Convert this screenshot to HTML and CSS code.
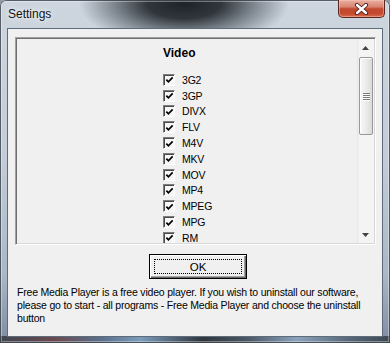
FILE: index.html
```html
<!DOCTYPE html>
<html lang="en">
<head>
<meta charset="utf-8">
<title>Settings</title>
<link rel="stylesheet" href="styles.css">
</head>
<body>
<div class="window">
  <div class="titlebar">
    <span class="title">Settings</span>
    <div class="close-btn">
      <svg width="15" height="12" viewBox="0 0 15 12" aria-hidden="true">
        <path d="M3 2 L12 10 M12 2 L3 10" stroke="#4a1e18" stroke-width="4.2" stroke-linecap="round" fill="none"/>
        <path d="M3 2 L12 10 M12 2 L3 10" stroke="#ffffff" stroke-width="2.4" stroke-linecap="round" fill="none"/>
      </svg>
    </div>
  </div>
  <div class="client">
    <div class="listbox">
      <div class="list-content">
        <div class="heading">Video</div>
        <ul class="items">
          <li><span class="cb"><svg width="10" height="10" viewBox="0 0 10 10"><path d="M1.5 4.5 L3.8 7 L8.5 2" stroke="#000" stroke-width="1.9" fill="none"/></svg></span><span class="label">3G2</span></li>
          <li><span class="cb"><svg width="10" height="10" viewBox="0 0 10 10"><path d="M1.5 4.5 L3.8 7 L8.5 2" stroke="#000" stroke-width="1.9" fill="none"/></svg></span><span class="label">3GP</span></li>
          <li><span class="cb"><svg width="10" height="10" viewBox="0 0 10 10"><path d="M1.5 4.5 L3.8 7 L8.5 2" stroke="#000" stroke-width="1.9" fill="none"/></svg></span><span class="label">DIVX</span></li>
          <li><span class="cb"><svg width="10" height="10" viewBox="0 0 10 10"><path d="M1.5 4.5 L3.8 7 L8.5 2" stroke="#000" stroke-width="1.9" fill="none"/></svg></span><span class="label">FLV</span></li>
          <li><span class="cb"><svg width="10" height="10" viewBox="0 0 10 10"><path d="M1.5 4.5 L3.8 7 L8.5 2" stroke="#000" stroke-width="1.9" fill="none"/></svg></span><span class="label">M4V</span></li>
          <li><span class="cb"><svg width="10" height="10" viewBox="0 0 10 10"><path d="M1.5 4.5 L3.8 7 L8.5 2" stroke="#000" stroke-width="1.9" fill="none"/></svg></span><span class="label">MKV</span></li>
          <li><span class="cb"><svg width="10" height="10" viewBox="0 0 10 10"><path d="M1.5 4.5 L3.8 7 L8.5 2" stroke="#000" stroke-width="1.9" fill="none"/></svg></span><span class="label">MOV</span></li>
          <li><span class="cb"><svg width="10" height="10" viewBox="0 0 10 10"><path d="M1.5 4.5 L3.8 7 L8.5 2" stroke="#000" stroke-width="1.9" fill="none"/></svg></span><span class="label">MP4</span></li>
          <li><span class="cb"><svg width="10" height="10" viewBox="0 0 10 10"><path d="M1.5 4.5 L3.8 7 L8.5 2" stroke="#000" stroke-width="1.9" fill="none"/></svg></span><span class="label">MPEG</span></li>
          <li><span class="cb"><svg width="10" height="10" viewBox="0 0 10 10"><path d="M1.5 4.5 L3.8 7 L8.5 2" stroke="#000" stroke-width="1.9" fill="none"/></svg></span><span class="label">MPG</span></li>
          <li><span class="cb"><svg width="10" height="10" viewBox="0 0 10 10"><path d="M1.5 4.5 L3.8 7 L8.5 2" stroke="#000" stroke-width="1.9" fill="none"/></svg></span><span class="label">RM</span></li>
        </ul>
      </div>
      <div class="scrollbar">
        <div class="sb-arrow"><svg width="7" height="4" viewBox="0 0 7 4"><path d="M0 4 L3.5 0 L7 4 Z" fill="#444"/></svg></div>
        <div class="sb-track">
          <div class="sb-thumb">
            <span class="grip"></span><span class="grip"></span><span class="grip"></span><span class="grip"></span>
          </div>
        </div>
        <div class="sb-arrow"><svg width="7" height="4" viewBox="0 0 7 4"><path d="M0 0 L7 0 L3.5 4 Z" fill="#444"/></svg></div>
      </div>
    </div>
    <div class="btn-row">
      <button class="ok-btn" type="button"><span class="focus">OK</span></button>
    </div>
    <p class="info">Free Media Player is a free video player. If you wish to uninstall our software, please go to start - all programs - Free Media Player and choose the uninstall button</p>
  </div>
</div>
</body>
</html>
```

FILE: styles.css
```css
html, body {
  margin: 0;
  padding: 0;
  width: 390px;
  height: 343px;
  overflow: hidden;
  background: #8e9aa6;
}

.window {
  width: 390px;
  height: 343px;
  box-sizing: border-box;
  display: flex;
  flex-direction: column;
  border-radius: 6px 6px 0 0;
  overflow: hidden;
  background:
    radial-gradient(ellipse 105px 42px at 184px 4px, #1f2327 0%, #30363c 35%, rgba(95,103,112,0.75) 65%, rgba(190,200,210,0) 100%),
    linear-gradient(to right, #3f4650 0%, #6a4a50 14%, #5a6f8a 26%, #7b9bbb 36%, #2f353c 52%, #4c5a68 64%, #8aa2bb 76%, #556575 90%, #3e4852 100%) bottom / 100% 7px no-repeat,
    linear-gradient(to bottom, #cdd6df 0%, #c3cdd7 45%, #a9b7c6 80%, #7d8da0 100%);
  box-shadow: inset 0 0 0 1px rgba(40, 48, 58, 0.75), inset 0 0 0 2px rgba(255, 255, 255, 0.35);
  font-family: "Liberation Sans", Arial, sans-serif;
  font-size: 10.5px;
  letter-spacing: -0.2px;
  color: #000;
}

.titlebar {
  height: 28px;
  flex: 0 0 28px;
  display: flex;
  align-items: flex-start;
  padding: 0 5px 0 8px;
}

.title {
  font-family: "Liberation Sans", Arial, sans-serif;
  font-size: 12px;
  letter-spacing: 0;
  line-height: 14px;
  margin-top: 7px;
  color: #111;
  text-shadow: 0 0 6px rgba(255, 255, 255, 0.9), 0 0 3px rgba(255, 255, 255, 0.7);
}

.close-btn {
  margin-left: auto;
  width: 47px;
  height: 18px;
  box-sizing: border-box;
  border: 1px solid #5a2620;
  border-top: none;
  border-radius: 0 0 5px 5px;
  background: linear-gradient(to bottom, #e9b0a2 0%, #d98571 40%, #c24a30 52%, #c4482d 78%, #d9694d 100%);
  box-shadow: inset 0 0 0 1px rgba(255, 205, 190, 0.45);
  display: flex;
  align-items: center;
  justify-content: center;
}

.close-btn svg {
  display: block;
}

.client {
  flex: 1;
  margin: 0 7px 6px 7px;
  background: #f0f0f0;
  border: 1px solid #5d6b7b;
  display: flex;
  flex-direction: column;
}

.listbox {
  margin: 8px 6px 0 7px;
  height: 208px;
  box-sizing: border-box;
  border: 1px solid;
  border-color: #a0a0a0 #ffffff #ffffff #a0a0a0;
  box-shadow: inset 1px 1px 0 #6f6f6f, inset -1px -1px 0 #d8d8d8;
  padding: 1px;
  display: flex;
  overflow: hidden;
}

.list-content {
  flex: 1;
  padding: 6px 0 0 146px;
  overflow: hidden;
}

.heading {
  font-weight: bold;
  font-size: 12px;
  letter-spacing: 0;
  line-height: 16px;
  margin: 0 0 11px 0;
}

.items {
  list-style: none;
  margin: 0;
  padding: 0;
}

.items li {
  height: 15.8px;
  display: flex;
  align-items: center;
}

.label {
  line-height: 10px;
}

.cb {
  width: 12px;
  height: 12px;
  box-sizing: border-box;
  border: 1px solid;
  border-color: #7d7d7d #ffffff #ffffff #7d7d7d;
  box-shadow: inset 1px 1px 0 #4a4a4a;
  background: #f7f7f7;
  margin-right: 7px;
  display: flex;
  align-items: center;
  justify-content: center;
}

.cb svg {
  display: block;
  margin: 1px 0 0 1px;
}

.scrollbar {
  width: 17px;
  flex: 0 0 17px;
  display: flex;
  flex-direction: column;
  background: linear-gradient(to right, #e6e6e6 0%, #f4f4f4 15%, #f4f4f4 100%);
}

.sb-arrow {
  height: 17px;
  flex: 0 0 17px;
  display: flex;
  align-items: center;
  justify-content: center;
}

.sb-arrow svg {
  display: block;
}

.sb-track {
  flex: 1;
  padding: 1px 1px 0 2px;
}

.sb-thumb {
  height: 78px;
  box-sizing: border-box;
  border: 1px solid #989898;
  border-radius: 2px;
  background: linear-gradient(to right, #f7f7f7 0%, #ececec 50%, #dadada 100%);
  box-shadow: inset 1px 1px 0 #ffffff;
  display: flex;
  flex-direction: column;
  align-items: center;
  justify-content: center;
  gap: 1px;
}

.grip {
  display: block;
  width: 7px;
  height: 1px;
  background: #7a7a7a;
  box-shadow: 0 1px 0 #ffffff;
}

.btn-row {
  margin: 9px 0 0 141px;
}

.ok-btn {
  width: 98px;
  height: 25px;
  box-sizing: border-box;
  padding: 0;
  margin: 0;
  border: 1px solid #000;
  background: #f0f0f0;
  box-shadow: inset 1px 1px 0 #ffffff, inset -1px -1px 0 #696969, inset -2px -2px 0 #a0a0a0;
  font-family: "Liberation Sans", Arial, sans-serif;
  font-size: 11.5px;
  color: #000;
  display: flex;
  align-items: stretch;
  justify-content: stretch;
}

.focus {
  flex: 1;
  margin: 4px;
  border: 1px dotted #000;
  display: flex;
  align-items: center;
  justify-content: center;
}

.info {
  margin: 7px 2px 0 9px;
  line-height: 13px;
}
```
